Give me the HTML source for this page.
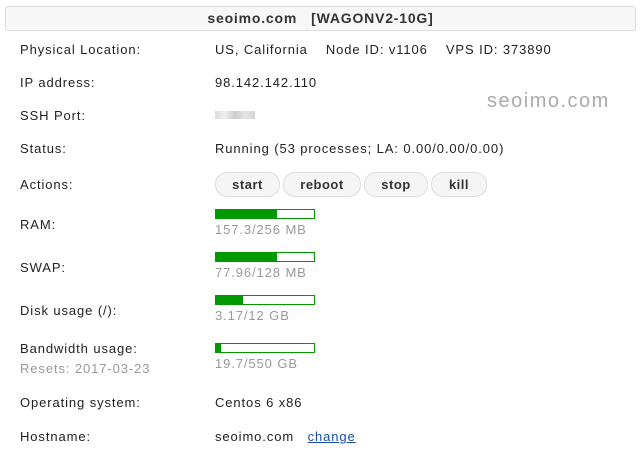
<!DOCTYPE html>
<html><head><style>
body{margin:0;width:640px;height:450px;background:#fff;font-family:"Liberation Sans",sans-serif;font-size:13px;color:#222;position:relative;overflow:hidden;letter-spacing:0.9px}
.a{position:absolute;white-space:nowrap;line-height:16px}
.hdr{position:absolute;left:5px;top:6px;width:629px;height:23px;border:1px solid #ddd;border-radius:3px;background:#f7f7f7;text-align:center;font-weight:bold;font-size:14px;line-height:23px;color:#333;letter-spacing:0.8px}
.btn{position:absolute;top:172px;height:23px;border:1px solid #ddd;border-radius:12px;background:#f5f5f5;font-weight:bold;font-size:13px;line-height:23px;text-align:center;color:#333;letter-spacing:0.5px}
.bar{position:absolute;left:215px;width:98px;height:8px;border:1px solid #009900;background:#fff}
.bar i{display:block;height:8px;background:#009900}
.g{color:#999}
</style></head><body>
<div class="hdr">seoimo.com&nbsp;&nbsp;&nbsp;[WAGONV2-10G]</div>
<div class="a" style="left:20px;top:42px">Physical Location:</div>
<div class="a" style="left:215px;top:42px">US, California&nbsp;&nbsp;&nbsp;&nbsp;Node ID: v1106&nbsp;&nbsp;&nbsp;&nbsp;VPS ID: 373890</div>
<div class="a" style="left:20px;top:75px">IP address:</div>
<div class="a" style="left:215px;top:75px">98.142.142.110</div>
<div class="a" style="left:487px;top:90px;font-size:20px;line-height:22px;color:#aaa;letter-spacing:1.5px">seoimo.com</div>
<div class="a" style="left:20px;top:108px">SSH Port:</div>
<div style="position:absolute;left:215px;top:111px;width:40px;height:8px;background:linear-gradient(90deg,#ddd,#eee,#ccc,#e5e5e5,#d5d5d5)"></div>
<div class="a" style="left:20px;top:141px">Status:</div>
<div class="a" style="left:215px;top:141px">Running (53 processes; LA: 0.00/0.00/0.00)</div>
<div class="a" style="left:20px;top:177px">Actions:</div>
<div class="btn" style="left:215px;width:63px">start</div>
<div class="btn" style="left:283px;width:76px">reboot</div>
<div class="btn" style="left:364px;width:62px">stop</div>
<div class="btn" style="left:431px;width:54px">kill</div>
<div class="a" style="left:20px;top:217px">RAM:</div>
<div class="bar" style="top:209px"><i style="width:61px"></i></div>
<div class="a g" style="left:215px;top:222px">157.3/256 MB</div>
<div class="a" style="left:20px;top:260px">SWAP:</div>
<div class="bar" style="top:252px"><i style="width:61px"></i></div>
<div class="a g" style="left:215px;top:265px">77.96/128 MB</div>
<div class="a" style="left:20px;top:303px">Disk usage (/):</div>
<div class="bar" style="top:295px"><i style="width:27px"></i></div>
<div class="a g" style="left:215px;top:308px">3.17/12 GB</div>
<div class="a" style="left:20px;top:341px">Bandwidth usage:</div>
<div class="a g" style="left:20px;top:361px">Resets: 2017-03-23</div>
<div class="bar" style="top:343px"><i style="width:5px"></i></div>
<div class="a g" style="left:215px;top:356px">19.7/550 GB</div>
<div class="a" style="left:20px;top:395px">Operating system:</div>
<div class="a" style="left:215px;top:395px">Centos 6 x86</div>
<div class="a" style="left:20px;top:429px">Hostname:</div>
<div class="a" style="left:215px;top:429px">seoimo.com&nbsp;&nbsp;&nbsp;<span style="color:#1a4fa0;text-decoration:underline">change</span></div>
</body></html>
